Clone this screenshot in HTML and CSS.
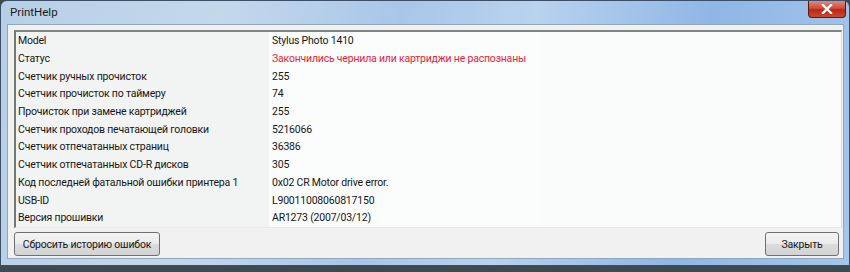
FILE: index.html
```html
<!DOCTYPE html>
<html>
<head>
<meta charset="utf-8">
<link rel="stylesheet" href="styles.css">
</head>
<body>
<div class="window">
  <div class="titlebar">
    <span class="title">PrintHelp</span>
    <div class="close">
      <svg width="12" height="10" viewBox="0 0 12 10"><path d="M2 1 L10 9 M10 1 L2 9" stroke="#fff" stroke-width="2.4" stroke-linecap="square"/></svg>
    </div>
  </div>
  <div class="client">
    <div class="list">
      <div class="row"><div class="k">Model</div><div class="v">Stylus Photo 1410</div></div>
      <div class="row"><div class="k">Статус</div><div class="v red">Закончились чернила или картриджи не распознаны</div></div>
      <div class="row"><div class="k">Счетчик ручных прочисток</div><div class="v">255</div></div>
      <div class="row"><div class="k">Счетчик прочисток по таймеру</div><div class="v">74</div></div>
      <div class="row"><div class="k">Прочисток при замене картриджей</div><div class="v">255</div></div>
      <div class="row"><div class="k">Счетчик проходов печатающей головки</div><div class="v">5216066</div></div>
      <div class="row"><div class="k">Счетчик отпечатанных страниц</div><div class="v">36386</div></div>
      <div class="row"><div class="k">Счетчик отпечатанных CD-R дисков</div><div class="v">305</div></div>
      <div class="row"><div class="k">Код последней фатальной ошибки принтера 1</div><div class="v">0x02 CR Motor drive error.</div></div>
      <div class="row"><div class="k">USB-ID</div><div class="v">L90011008060817150</div></div>
      <div class="row"><div class="k">Версия прошивки</div><div class="v">AR1273 (2007/03/12)</div></div>
    </div>
    <div class="buttons">
      <button class="btn btn-reset">Сбросить историю ошибок</button>
      <button class="btn btn-close">Закрыть</button>
    </div>
  </div>
</div>
</body>
</html>
```
FILE: styles.css
```css
html, body {
  margin: 0;
  padding: 0;
}
body {
  width: 850px;
  height: 272px;
  background: #3d4a50;
  font-family: Roboto, "Open Sans", sans-serif;
  font-size: 10.5px;
  letter-spacing: -0.2px;
  color: #161616;
  overflow: hidden;
}
.window {
  width: 850px;
  height: 266px;
  box-sizing: border-box;
  border-radius: 7px 7px 0 0;
  border: 1px solid #3b5068;
  background: linear-gradient(100deg, #b7cfe6 0%, #c4d8ec 25%, #a9c6e8 45%, #b9d2ee 60%, #8fb6e6 80%, #a6c6ea 100%);
  display: flex;
  flex-direction: column;
  padding: 0 5px 6px 6px;
}
.titlebar {
  height: 23px;
  display: flex;
  justify-content: space-between;
  align-items: flex-start;
}
.title {
  padding: 4px 0 0 3px;
  font-size: 11.5px;
  letter-spacing: 0;
  color: #1a1a1a;
}
.close {
  width: 38px;
  height: 17px;
  margin-right: -2px;
  border: 1px solid #5d1a14;
  border-top: none;
  border-radius: 0 0 4px 4px;
  background: linear-gradient(#e08a7c 0%, #cf4d3c 45%, #b92614 55%, #cb4a33 100%);
  display: flex;
  align-items: center;
  justify-content: center;
  box-sizing: border-box;
}
.client {
  flex: 1;
  background: #f0f1f0;
  border: 1px solid #8fa6bd;
  padding: 5px 1px 2px 6px;
  display: flex;
  flex-direction: column;
}
.list {
  height: 198px;
  border-top: 2px solid #7c8580;
  border-left: 2px solid #6f7873;
  border-right: 1px solid #d6dbdc;
  border-bottom: 1px solid #e6e9e9;
  background: #fafbfb;
  box-sizing: border-box;
}
.row {
  display: flex;
  height: 17.7px;
  align-items: center;
  white-space: nowrap;
}
.k {
  width: 251px;
  flex: none;
  padding-left: 2px;
  background: #f2f3f3;
  height: 100%;
  display: flex;
  align-items: center;
}
.v {
  flex: none;
  padding-left: 3px;
  width: 270px;
  background: #fbfcfc;
  height: 100%;
  display: flex;
  align-items: center;
}
.red {
  color: #e5243f;
}
.buttons {
  display: flex;
  justify-content: space-between;
  margin-top: 4px;
  padding-right: 3px;
}
.btn {
  height: 24px;
  font-family: Roboto, "Open Sans", sans-serif;
  font-size: 10.5px;
  letter-spacing: -0.2px;
  color: #161616;
  white-space: nowrap;
  border: 1px solid #707070;
  border-radius: 3px;
  background: linear-gradient(#f4f4f4 0%, #ebebeb 50%, #dcdcdc 51%, #d3d3d3 100%);
  padding: 0;
}
.btn-reset {
  width: 146px;
}
.btn-close {
  width: 74px;
}
```
